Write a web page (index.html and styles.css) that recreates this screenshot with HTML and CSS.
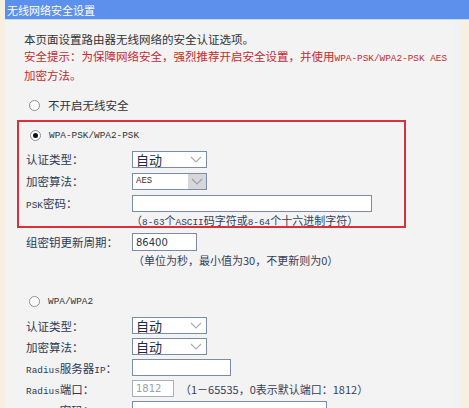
FILE: index.html
```html
<!DOCTYPE html>
<html lang="zh-CN">

<head>
    <meta charset="UTF-8">
    <meta name="viewport" content="width=device-width, initial-scale=1.0">
    <title>无线网络安全设置</title>
    <link rel="stylesheet" href="styles.css">
</head>

<body>
    <div class="title">无线网络安全设置</div>
    <div class="panel">
        <p class="intro">本页面设置路由器无线网络的安全认证选项。</p>
        <p class="warn">安全提示：为保障网络安全，强烈推荐开启安全设置，并使用<span class="mono">WPA-PSK/WPA2-PSK AES</span></p>
        <p class="warn">加密方法。</p>

        <div class="radio-row first"><span class="radio"></span><span>不开启无线安全</span></div>

        <div class="box">
            <div class="radio-row"><span class="radio on"></span><span class="mono">WPA-PSK/WPA2-PSK</span></div>
            <div class="row">
                <span class="label">认证类型：</span>
                <div class="select w75"><span class="big">自动</span><svg class="arrow" width="12" height="7" viewBox="0 0 12 7"><polyline points="1,1 6,6 11,1" /></svg></div>
            </div>
            <div class="row">
                <span class="label">加密算法：</span>
                <div class="select w75"><span class="mono small">AES</span><span class="btn"><svg class="arrow" width="12" height="7" viewBox="0 0 12 7"><polyline points="1,1 6,6 11,1" /></svg></span></div>
            </div>
            <div class="row">
                <span class="label"><span class="mono">PSK</span>密码：</span>
                <div class="input w240"></div>
            </div>
            <p class="hint">（<span class="mono">8-63</span>个<span class="mono">ASCII</span>码字符或<span class="mono">8-64</span>个十六进制字符）</p>
        </div>

        <div class="row outer">
            <span class="label">组密钥更新周期：</span>
            <div class="input w65 num">86400</div>
        </div>
        <p class="hint outer">（单位为秒，最小值为30，不更新则为0）</p>

        <div class="radio-row wpa"><span class="radio"></span><span class="mono">WPA/WPA2</span></div>
        <div class="row outer">
            <span class="label">认证类型：</span>
            <div class="select w75"><span class="big">自动</span><svg class="arrow" width="12" height="7" viewBox="0 0 12 7"><polyline points="1,1 6,6 11,1" /></svg></div>
        </div>
        <div class="row outer">
            <span class="label">加密算法：</span>
            <div class="select w75"><span class="big">自动</span><svg class="arrow" width="12" height="7" viewBox="0 0 12 7"><polyline points="1,1 6,6 11,1" /></svg></div>
        </div>
        <div class="row outer">
            <span class="label"><span class="mono">Radius</span>服务器<span class="mono">IP</span>：</span>
            <div class="input w99"></div>
        </div>
        <div class="row outer">
            <span class="label"><span class="mono">Radius</span>端口：</span>
            <div class="input w42 num dim">1812</div>
            <span class="note">（1－65535，0表示默认端口：1812）</span>
        </div>
        <div class="row outer">
            <span class="label"><span class="mono">Radius</span>密码：</span>
            <div class="input w195"></div>
        </div>
    </div>
</body>

</html>
```

FILE: styles.css
```css
* {
    margin: 0;
    padding: 0;
    box-sizing: border-box;
}

body {
    width: 469px;
    height: 408px;
    overflow: hidden;
    background: #f7f0e1;
    font-family: "Noto Sans CJK SC", sans-serif;
    font-size: 11.5px;
    color: #2f3338;
}

.title {
    margin-left: 5px;
    height: 20px;
    line-height: 20px;
    padding-left: 2px;
    background: #5d8fed;
    color: #fff;
    font-size: 11px;
    border-bottom: 1px solid #c9d8f3;
}

.panel {
    margin: 0 7px 0 5px;
    height: 400px;
    padding: 11px 0 0 19px;
    background: #f3f3f3;
    border-right: 7px solid #f0f1f5;
}

.intro,
.warn {
    line-height: 17px;
}

.warn {
    color: #c42b31;
}

.mono {
    font-family: "Liberation Mono", monospace;
    font-size: 9.4px;
}

.small {
    font-size: 9px;
    color: #333;
}

.radio-row {
    display: flex;
    align-items: center;
    height: 20px;
    gap: 8px;
    padding-left: 5px;
}

.radio-row.first {
    margin-top: 11px;
}

.radio-row.wpa {
    margin-top: 24px;
}

.radio {
    width: 11px;
    height: 11px;
    border: 1px solid #8a8f96;
    border-radius: 50%;
    background: #fff;
    display: flex;
    align-items: center;
    justify-content: center;
}

.radio.on::after {
    content: "";
    width: 5px;
    height: 5px;
    border-radius: 50%;
    background: #111;
}

.box {
    margin: 5px 0 0 -7px;
    width: 389px;
    border: 2px solid #d8313b;
    padding: 3px 0 0 7px;
    height: 108px;
}

.box .radio-row {
    padding-left: 4px;
}

.row {
    display: flex;
    align-items: center;
    height: 22px;
}

.box .row:nth-of-type(2) {
    margin-top: 3px;
}

.row.outer {
    height: 21px;
    padding-left: 2px;
}

.box + .row.outer {
    margin-top: 3px;
    height: 22px;
}

.wpa + .row.outer {
    margin-top: 4px;
}

.label {
    width: 106px;
    color: #2c3a55;
}

.select,
.input {
    height: 17px;
    border: 1px solid #7d8ca6;
    background: #fff;
    display: flex;
    align-items: center;
    padding-left: 3px;
}

.select {
    justify-content: space-between;
}

.big {
    font-size: 13px;
    color: #1d2a45;
}

.arrow {
    fill: none;
    stroke: #a8adb6;
    stroke-width: 1.2;
    margin-right: 4px;
}

.btn {
    width: 18px;
    height: 15px;
    background: #d6d7da;
    display: flex;
    align-items: center;
    justify-content: center;
}

.btn .arrow {
    margin-right: 0;
    stroke: #9aa0a8;
}

.w75 { width: 75px; }
.w240 { width: 240px; }
.w65 { width: 65px; height: 18px; }
.w99 { width: 99px; }
.w42 { width: 42px; }
.w195 { width: 195px; }

.num {
    font-family: "DejaVu Sans", sans-serif;
    font-size: 10px;
    color: #2b3550;
}

.num.dim {
    color: #9aa0a8;
    border-color: #a5b0c2;
}

.note {
    margin-left: 6px;
    font-size: 11px;
    color: #33405c;
}

.hint {
    padding-left: 105px;
    line-height: 13px;
    font-size: 11px;
    color: #33405c;
}

.hint.outer {
    padding-left: 109px;
    line-height: 14px;
}
```
